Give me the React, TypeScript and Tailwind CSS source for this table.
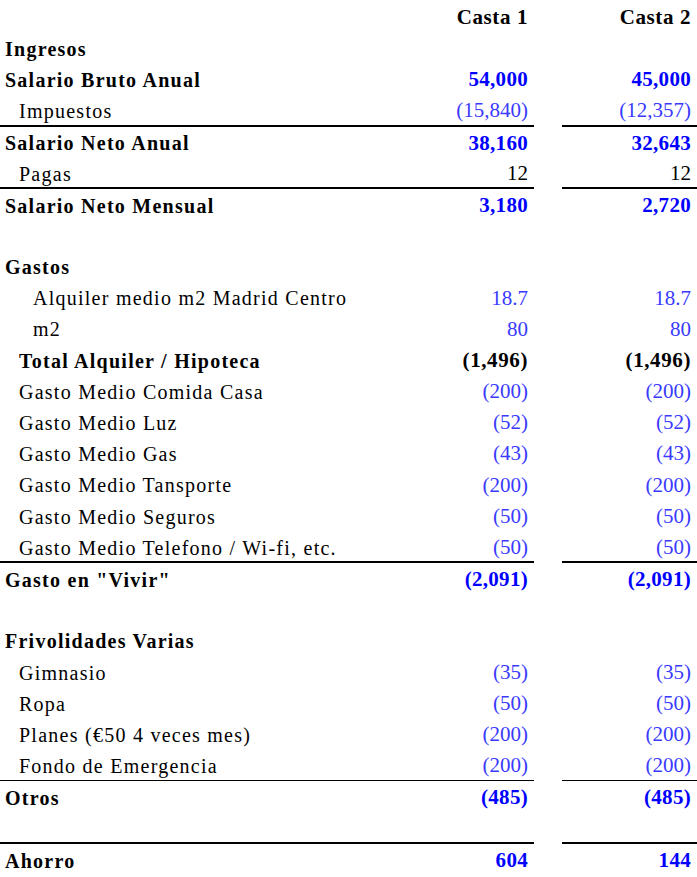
import React from "react";

type Style = "bb" | "b" | "k" | "kb" | "";
type Row = {
  label?: string;
  indent?: 0 | 1 | 2;
  bold?: boolean;
  v1?: string;
  v2?: string;
  vs?: Style;
  top?: "thick" | "thin";
};

const rows: Row[] = [
  { label: "", v1: "Casta 1", v2: "Casta 2", vs: "kb" },
  { label: "Ingresos", bold: true },
  { label: "Salario Bruto Anual", bold: true, v1: "54,000", v2: "45,000", vs: "bb" },
  { label: "Impuestos", indent: 1, v1: "(15,840)", v2: "(12,357)", vs: "b" },
  { label: "Salario Neto Anual", bold: true, v1: "38,160", v2: "32,643", vs: "bb", top: "thick" },
  { label: "Pagas", indent: 1, v1: "12", v2: "12", vs: "k" },
  { label: "Salario Neto Mensual", bold: true, v1: "3,180", v2: "2,720", vs: "bb", top: "thick" },
  { label: "" },
  { label: "Gastos", bold: true },
  { label: "Alquiler medio m2 Madrid Centro", indent: 2, v1: "18.7", v2: "18.7", vs: "b" },
  { label: "m2", indent: 2, v1: "80", v2: "80", vs: "b" },
  { label: "Total Alquiler / Hipoteca", indent: 1, bold: true, v1: "(1,496)", v2: "(1,496)", vs: "kb" },
  { label: "Gasto Medio Comida Casa", indent: 1, v1: "(200)", v2: "(200)", vs: "b" },
  { label: "Gasto Medio Luz", indent: 1, v1: "(52)", v2: "(52)", vs: "b" },
  { label: "Gasto Medio Gas", indent: 1, v1: "(43)", v2: "(43)", vs: "b" },
  { label: "Gasto Medio Tansporte", indent: 1, v1: "(200)", v2: "(200)", vs: "b" },
  { label: "Gasto Medio Seguros", indent: 1, v1: "(50)", v2: "(50)", vs: "b" },
  { label: "Gasto Medio Telefono / Wi-fi, etc.", indent: 1, v1: "(50)", v2: "(50)", vs: "b" },
  { label: 'Gasto en "Vivir"', bold: true, v1: "(2,091)", v2: "(2,091)", vs: "bb", top: "thick" },
  { label: "" },
  { label: "Frivolidades Varias", bold: true },
  { label: "Gimnasio", indent: 1, v1: "(35)", v2: "(35)", vs: "b" },
  { label: "Ropa", indent: 1, v1: "(50)", v2: "(50)", vs: "b" },
  { label: "Planes (€50 4 veces mes)", indent: 1, v1: "(200)", v2: "(200)", vs: "b" },
  { label: "Fondo de Emergencia", indent: 1, v1: "(200)", v2: "(200)", vs: "b" },
  { label: "Otros", bold: true, v1: "(485)", v2: "(485)", vs: "bb", top: "thin" },
  { label: "" },
  { label: "Ahorro", bold: true, v1: "604", v2: "144", vs: "bb", top: "thick" },
];

const valClass: Record<string, string> = {
  bb: "font-bold text-[#0000ff] tracking-[0.3px]",
  b: "text-[#3a3aff]",
  k: "text-black",
  kb: "font-bold text-black tracking-[0.6px]",
  "": "",
};

const indentClass = ["pl-[5px]", "pl-[19px]", "pl-[33px]"];

export default function App() {
  return (
    <div
      className="w-[697px] h-[877px] bg-white text-black text-[20px] overflow-hidden"
      style={{ fontFamily: '"Liberation Serif", "Times New Roman", serif' }}
    >
      <div className="grid grid-cols-[400px_134px_28px_135px]">
        {rows.map((r, i) => {
          const border =
            r.top === "thick"
              ? "border-t-2 border-black"
              : r.top === "thin"
              ? "border-t border-black"
              : "";
          const vc = valClass[r.vs || ""];
          return (
            <React.Fragment key={i}>
              <div
                className={`h-[31.2px] pt-[4px] flex items-center whitespace-nowrap tracking-[1.25px] ${indentClass[r.indent || 0]} ${r.bold ? "font-bold" : ""} ${border}`}
              >
                {r.label}
              </div>
              <div className={`h-[31.2px] pt-[4px] flex items-center justify-end pr-[6px] text-[21px] ${vc} ${border}`}>
                {r.v1}
              </div>
              <div className="h-[31.2px]" />
              <div className={`h-[31.2px] pt-[4px] flex items-center justify-end pr-[6px] text-[21px] ${vc} ${border}`}>
                {r.v2}
              </div>
            </React.Fragment>
          );
        })}
      </div>
    </div>
  );
}
